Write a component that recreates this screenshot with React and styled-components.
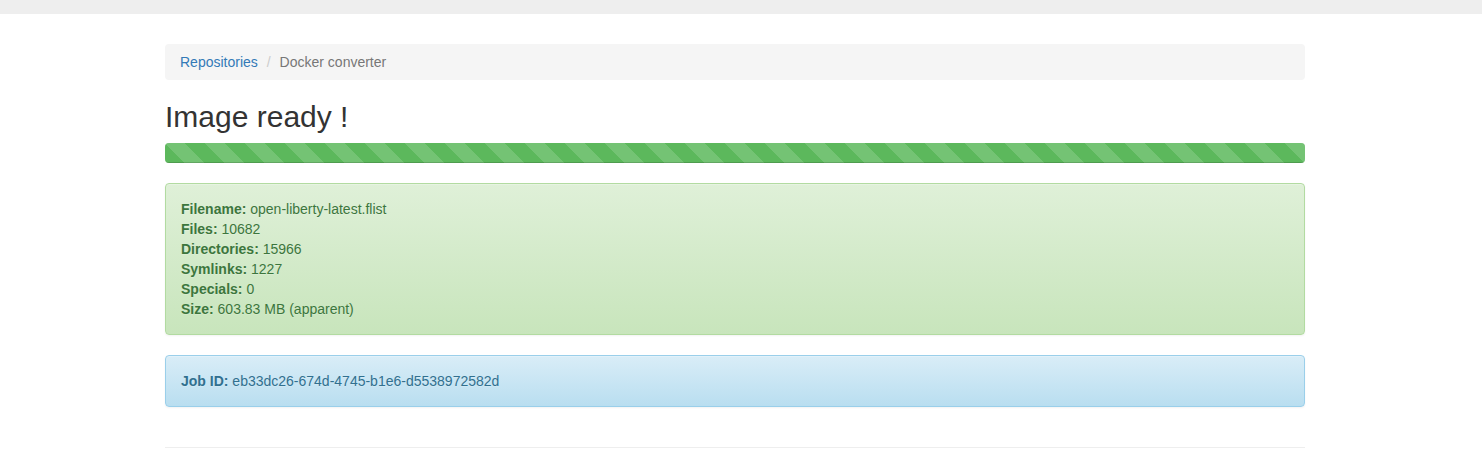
import React from "react";
import styled, { createGlobalStyle } from "styled-components";

const GlobalStyle = createGlobalStyle`
	* {
		box-sizing: border-box;
	}
	body {
		margin: 0;
		background: #fff;
		font-family: "Liberation Sans", Arial, Helvetica, sans-serif;
		font-size: 14px;
		line-height: 20px;
		color: #333;
	}
`;

const TopBar = styled.div`
	height: 14px;
	background-color: #eee;
`;

const Page = styled.div`
	padding-right: 12px;
`;

const Container = styled.div`
	width: 1140px;
	margin: 30px auto 0;
`;

const Breadcrumb = styled.ol`
	display: flex;
	list-style: none;
	margin: 0 0 20px;
	padding: 8px 15px;
	background-color: #f5f5f5;
	border-radius: 4px;
`;

const Crumb = styled.li`
	color: #777;
	& + & {
		margin-left: 4px;
	}
	& + &::before {
		content: "/\\00a0";
		padding: 0 5px;
		color: #ccc;
	}
	a {
		color: #337ab7;
		text-decoration: none;
	}
`;

const Title = styled.h2`
	font-size: 30px;
	font-weight: 500;
	line-height: 1.1;
	margin: 20px 0 10px;
	color: #333;
`;

const Progress = styled.div`
	height: 20px;
	margin-bottom: 20px;
	overflow: hidden;
	background-color: #f5f5f5;
	border-radius: 4px;
	box-shadow: inset 0 1px 2px rgba(0, 0, 0, 0.1);
`;

const Bar = styled.div`
	height: 100%;
	background-color: #5cb85c;
	background-image: linear-gradient(
		45deg,
		rgba(255, 255, 255, 0.15) 25%,
		transparent 25%,
		transparent 50%,
		rgba(255, 255, 255, 0.15) 50%,
		rgba(255, 255, 255, 0.15) 75%,
		transparent 75%,
		transparent
	);
	background-size: 40px 40px;
	box-shadow: inset 0 -1px 0 rgba(0, 0, 0, 0.15);
`;

const tones = {
	success: { from: "#dff0d8", to: "#c8e5bc", border: "#b2dba1", text: "#3c763d" },
	info: { from: "#d9edf7", to: "#b9def0", border: "#9acfea", text: "#31708f" },
};

const Alert = styled.div`
	padding: 15px;
	margin-bottom: 20px;
	border: 1px solid ${({ $tone }) => tones[$tone].border};
	border-radius: 4px;
	color: ${({ $tone }) => tones[$tone].text};
	background-image: linear-gradient(
		to bottom,
		${({ $tone }) => tones[$tone].from} 0,
		${({ $tone }) => tones[$tone].to} 100%
	);
	text-shadow: 0 1px 0 rgba(255, 255, 255, 0.2);
	box-shadow: inset 0 1px 0 rgba(255, 255, 255, 0.25), 0 1px 2px rgba(0, 0, 0, 0.05);
	b {
		font-weight: 700;
	}
`;

const Line = styled.div``;

const Footer = styled.footer`
	padding-top: 20px;
`;

const Rule = styled.hr`
	margin: 0 0 20px;
	border: 0;
	border-top: 1px solid #eee;
`;

const stats = [
	["Filename", "open-liberty-latest.flist"],
	["Files", "10682"],
	["Directories", "15966"],
	["Symlinks", "1227"],
	["Specials", "0"],
	["Size", "603.83 MB (apparent)"],
];

const App = () => {
	return (
		<>
			<GlobalStyle />
			<TopBar />
			<Page>
				<Container>
					<Breadcrumb>
						<Crumb>
							<a href="#">Repositories</a>
						</Crumb>
						<Crumb>Docker converter</Crumb>
					</Breadcrumb>
					<Title>Image ready !</Title>
					<Progress>
						<Bar style={{ width: "100%" }} />
					</Progress>
					<Alert $tone="success">
						{stats.map(([label, value]) => (
							<Line key={label}>
								<b>{label}:</b> {value}
							</Line>
						))}
					</Alert>
					<Alert $tone="info">
						<b>Job ID:</b> eb33dc26-674d-4745-b1e6-d5538972582d
					</Alert>
					<Footer>
						<Rule />
					</Footer>
				</Container>
			</Page>
		</>
	);
};

export default App;
